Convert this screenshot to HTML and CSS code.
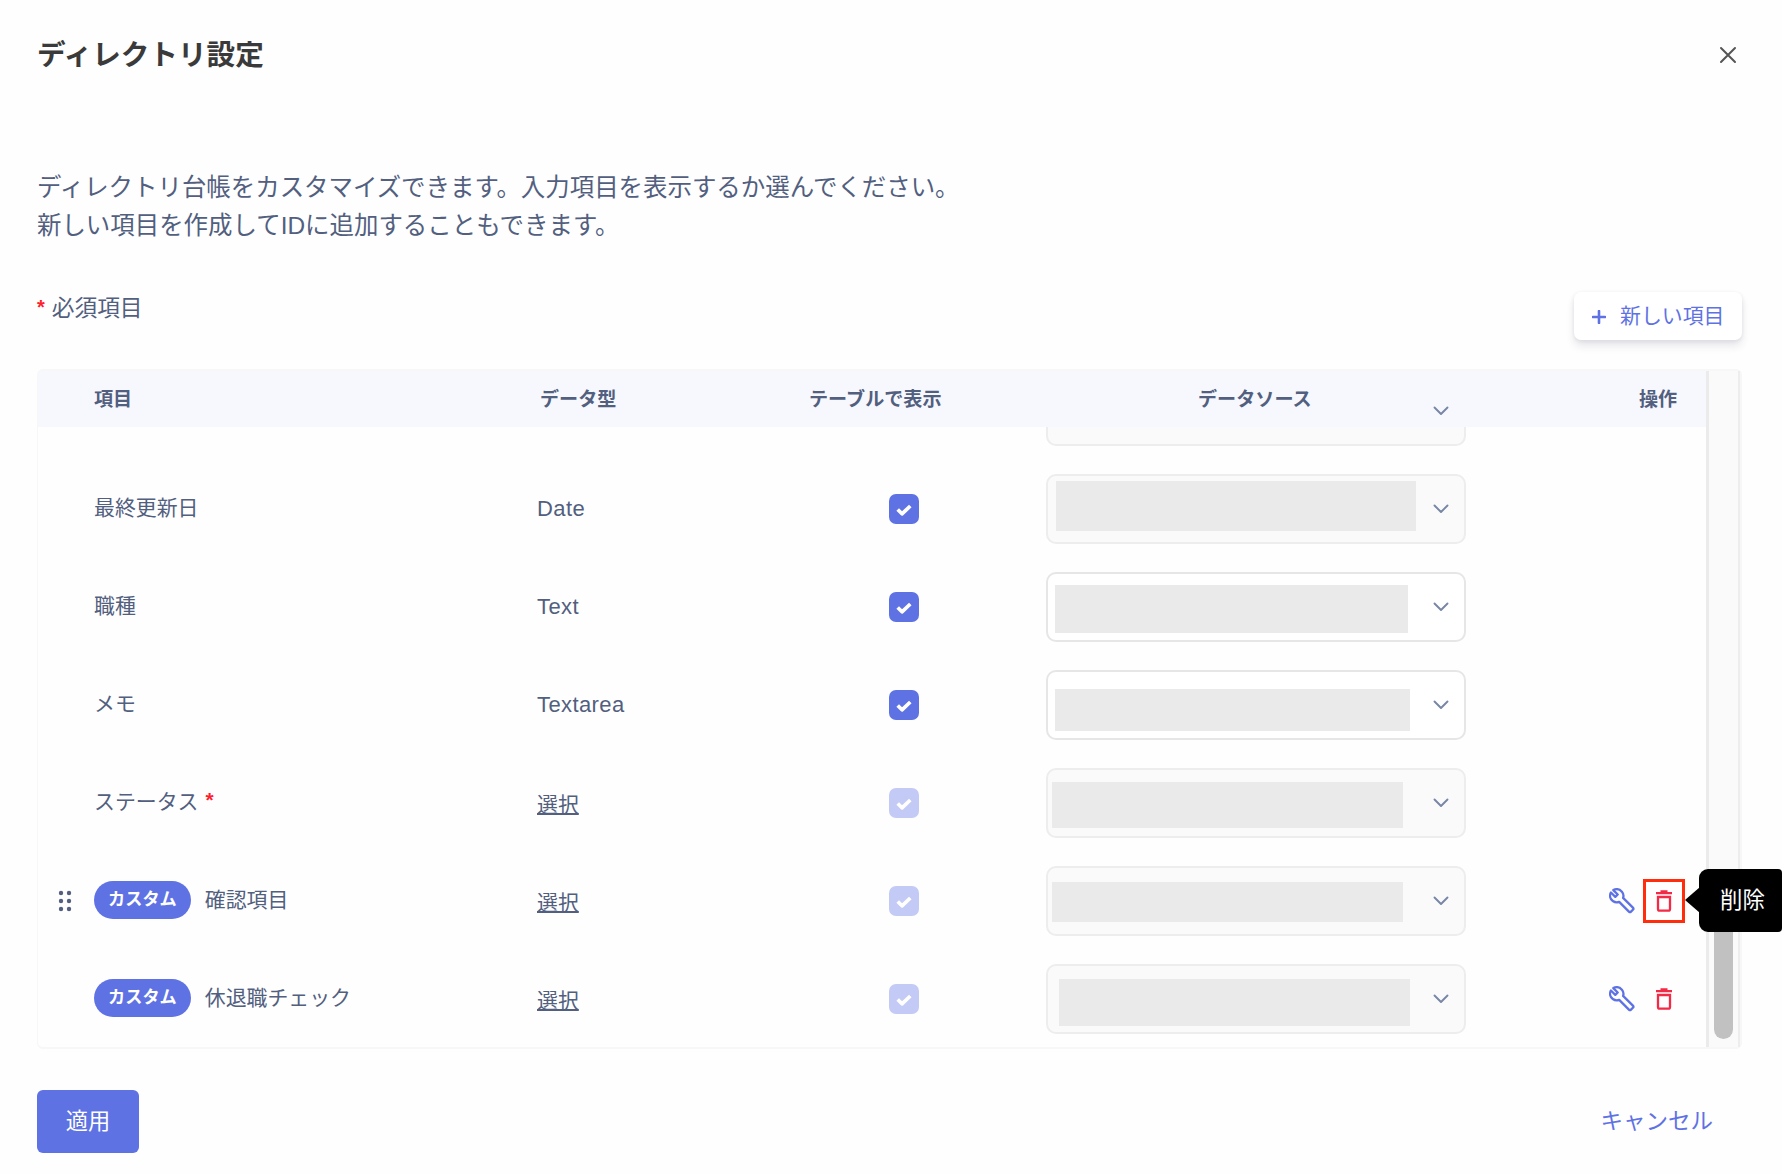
FILE: index.html
```html
<!DOCTYPE html>
<html lang="ja">
<head>
  <meta charset="UTF-8">
  <meta name="viewport" content="width=device-width,initial-scale=1.0">
  <title>ディレクトリ設定</title>
  <link rel="stylesheet" href="styles.css">
</head>
<body>
  <!-- Shared icons -->
  <svg class="sprite" aria-hidden="true">
    <symbol id="chevron" viewBox="0 0 16 10">
      <path d="M1.5 1.5 8 8l6.500-6.500" fill="none" stroke="currentColor" stroke-width="1.9" stroke-linecap="round" stroke-linejoin="round"/>
    </symbol>
    <symbol id="check" viewBox="0 0 16 12">
      <path d="M1.700 5.500 6 9.800 14.300 2" fill="none" stroke="#fff" stroke-width="3.700" stroke-linejoin="round"/>
    </symbol>
    <symbol id="wrench" viewBox="0 0 26 26">
      <path d="M4.300 2.100 8.700 6.500 6.300 8.900 1.900 4.500C.2 7.800 1.300 11.300 3.800 13c2 1.400 4.400 1.600 6.400.9l9.700 9.700c.6.6 1.500.6 2.100 0l1.900-1.900c.6-.6.6-1.500 0-2.100l-9.800-9.700c.7-2 .3-4.400-1.200-6.200C10.800 1.300 7.300.6 4.300 2.100z" fill="none" stroke="currentColor" stroke-width="2.300" stroke-linejoin="round"/>
    </symbol>
    <symbol id="trash" viewBox="0 0 18 22">
      <path d="M1 3.100h16M5.500 1.400h7" fill="none" stroke="currentColor" stroke-width="2.200"/>
      <path d="M3 7h12v12a1.700 1.700 0 0 1-1.700 1.700H4.700A1.700 1.700 0 0 1 3 19z" fill="none" stroke="currentColor" stroke-width="2.300"/>
    </symbol>
  </svg>

  <div class="modal">
    <header class="modal-header">
      <h1>ディレクトリ設定</h1>
      <button class="close" aria-label="閉じる">
        <svg width="18" height="18" viewBox="0 0 18 18"><path d="M2 2l14 14M16 2 2 16" stroke="#555" stroke-width="2" stroke-linecap="round"/></svg>
      </button>
    </header>

    <p class="lead">ディレクトリ台帳をカスタマイズできます。入力項目を表示するか選んでください。<br>新しい項目を作成してIDに追加することもできます。</p>

    <div class="toolbar">
      <div class="legend"><span class="req">*</span>必須項目</div>
      <button class="btn-new">
        <svg width="14" height="14" viewBox="0 0 14 14"><path d="M7 1v12M1 7h12" stroke="currentColor" stroke-width="2.600" stroke-linecap="round"/></svg>
        <span>新しい項目</span>
      </button>
    </div>

    <div class="table">
      <div class="table-main">
        <div class="row head">
          <div></div>
          <div>項目</div>
          <div class="type">データ型</div>
          <div class="show">テーブルで表示</div>
          <div class="source">データソース</div>
          <div class="ops">操作</div>
        </div>
        <div class="body">
          <div class="row">
            <div></div><div></div><div></div><div></div>
            <div class="select disabled"><svg class="chev"><use href="#chevron"/></svg></div>
            <div></div>
          </div>
          <div class="row">
            <div></div>
            <div class="name">最終更新日</div>
            <div class="type">Date</div>
            <div class="show"><span class="box"><svg><use href="#check"/></svg></span></div>
            <div class="select disabled"><span class="mask mask-1"></span><svg class="chev"><use href="#chevron"/></svg></div>
            <div></div>
          </div>
          <div class="row">
            <div></div>
            <div class="name">職種</div>
            <div class="type">Text</div>
            <div class="show"><span class="box"><svg><use href="#check"/></svg></span></div>
            <div class="select"><span class="mask mask-2"></span><svg class="chev"><use href="#chevron"/></svg></div>
            <div></div>
          </div>
          <div class="row">
            <div></div>
            <div class="name">メモ</div>
            <div class="type">Textarea</div>
            <div class="show"><span class="box"><svg><use href="#check"/></svg></span></div>
            <div class="select"><span class="mask mask-3"></span><svg class="chev"><use href="#chevron"/></svg></div>
            <div></div>
          </div>
          <div class="row">
            <div></div>
            <div class="name">ステータス<span class="req">*</span></div>
            <div class="type"><span class="link">選択</span></div>
            <div class="show"><span class="box off"><svg><use href="#check"/></svg></span></div>
            <div class="select disabled"><span class="mask mask-4"></span><svg class="chev"><use href="#chevron"/></svg></div>
            <div></div>
          </div>
          <div class="row">
            <div class="handle">
              <svg width="14" height="22" viewBox="0 0 14 22" fill="#525f7f"><circle cx="3" cy="3" r="2.200"/><circle cx="11" cy="3" r="2.200"/><circle cx="3" cy="11" r="2.200"/><circle cx="11" cy="11" r="2.200"/><circle cx="3" cy="19" r="2.200"/><circle cx="11" cy="19" r="2.200"/></svg>
            </div>
            <div class="name"><span class="badge">カスタム</span>確認項目</div>
            <div class="type"><span class="link">選択</span></div>
            <div class="show"><span class="box off"><svg><use href="#check"/></svg></span></div>
            <div class="select disabled"><span class="mask mask-5"></span><svg class="chev"><use href="#chevron"/></svg></div>
            <div class="ops">
              <svg class="wrench"><use href="#wrench"/></svg>
              <span class="delete marked"><svg class="trash"><use href="#trash"/></svg><span class="tooltip">削除</span></span>
            </div>
          </div>
          <div class="row">
            <div></div>
            <div class="name"><span class="badge">カスタム</span>休退職チェック</div>
            <div class="type"><span class="link">選択</span></div>
            <div class="show"><span class="box off"><svg><use href="#check"/></svg></span></div>
            <div class="select disabled"><span class="mask mask-6"></span><svg class="chev"><use href="#chevron"/></svg></div>
            <div class="ops">
              <svg class="wrench"><use href="#wrench"/></svg>
              <span class="delete"><svg class="trash"><use href="#trash"/></svg></span>
            </div>
          </div>
        </div>
      </div>
      <div class="scrollbar"><div class="thumb"></div></div>
    </div>

    <footer class="modal-footer">
      <button class="btn-apply">適用</button>
      <button class="btn-cancel">キャンセル</button>
    </footer>
  </div>
</body>
</html>
```
FILE: styles.css
```css
* {
  box-sizing: border-box;
}
body {
  margin: 0;
  background: #fefefe;
  color: #525f7f;
  font-family: "Liberation Sans", "Noto Sans CJK JP", sans-serif;
  font-size: 20.9px;
  overflow: hidden;
}
button {
  border: 0;
  padding: 0;
  background: none;
  font: inherit;
  color: #5e72e4;
}
svg {
  display: block;
  flex: none;
}
.sprite {
  position: absolute;
  width: 0;
  height: 0;
}
.modal {
  height: 1174px;
  padding: 34px 40px 0 37px;
}

/* header */
.modal-header {
  display: flex;
  align-items: center;
  justify-content: space-between;
  height: 41px;
  padding-right: 5px;
}
.modal-header h1 {
  margin: 0;
  padding-top: 2px;
  font-size: 28.6px;
  font-weight: 700;
  line-height: 41px;
  color: #3a3a3a;
}
.lead {
  margin: 94px 0 0;
  font-size: 24.45px;
  line-height: 37.5px;
}
.req {
  color: #ff1f2f;
}
.toolbar {
  display: flex;
  justify-content: space-between;
  height: 125px;
  padding-top: 49px;
}
.legend {
  height: 26px;
  margin-top: 1px;
  font-size: 22.7px;
  line-height: 26px;
}
.legend .req {
  margin-right: 7px;
  font-size: 20px;
  font-weight: 700;
  vertical-align: 2px;
}
.btn-new {
  display: flex;
  align-items: center;
  gap: 14px;
  width: 168px;
  height: 48px;
  margin-top: -1px;
  padding: 0 0 0 18px;
  border-radius: 7px;
  background: #fff;
  box-shadow: 0 6px 9px rgba(50, 50, 93, .11), 0 1px 4px rgba(0, 0, 0, .08);
}
.btn-new svg {
  margin-top: 1px;
}
.btn-new span {
  padding-bottom: 4px;
}

/* table */
.table {
  position: relative;
  display: flex;
  height: 680px;
  border: 2px solid #f7f7f8;
  border-left-width: 1px;
  border-radius: 6px;
}
.table-main {
  flex: 1;
  overflow: hidden;
}
.row {
  display: grid;
  grid-template-columns: 56px 443px 220px 289px 420px 1fr;
  align-items: center;
  height: 97.95px;
}
.head {
  position: relative;
  z-index: 1;
  height: 56px;
  padding-bottom: 3px;
  background: #f7f8fd;
  font-size: 19.1px;
  font-weight: 700;
}
.head .type { padding-left: 3px; }
.head .show { padding-left: 52px; }
.head .source { padding-left: 152px; }
.head .ops { padding-left: 173px; }
.body {
  margin-top: -65px;
}
.body .name {
  display: flex;
  align-items: center;
  height: 40px;
  margin-top: -6px;
}
.body .name .req {
  margin-left: 7px;
  font-weight: 700;
}
.body .type {
  font-size: 22px;
  letter-spacing: .4px;
  padding-top: 1px;
}
.link {
  font-size: 20.9px;
  letter-spacing: 0;
  text-decoration: underline;
  text-decoration-thickness: 2px;
  text-underline-offset: 1px;
  text-decoration-skip-ink: all;
}
.body .show {
  padding-left: 132px;
}
.handle {
  padding-left: 20px;
}
.badge {
  height: 38px;
  margin: 5px 14px 0 0;
  padding: 0 14px;
  border-radius: 19px;
  background: #5e72e4;
  color: #fff;
  font-size: 17.2px;
  font-weight: 700;
  line-height: 37px;
}
.box {
  display: flex;
  align-items: center;
  justify-content: center;
  width: 30px;
  height: 30px;
  margin-top: 1px;
  border-radius: 7px;
  background: #5e72e4;
}
.box svg {
  width: 16px;
  height: 12px;
  margin-top: 2px;
}
.box.off {
  background: #c3caf6;
}
.select {
  position: relative;
  height: 70px;
  border: 2px solid #e6e6e7;
  border-radius: 10px;
  background: #fff;
}
.select.disabled {
  border-color: #ededed;
  background: #fafafa;
}
.chev {
  position: absolute;
  z-index: 2;
  top: 28px;
  right: 15px;
  width: 16px;
  height: 10px;
  color: #7886a5;
}
.mask {
  position: absolute;
  background: #eaeaea;
}
.mask-1 { left: 8px; top: 5px; width: 360px; height: 50px; }
.mask-2 { left: 7px; top: 11px; width: 353px; height: 48px; }
.mask-3 { left: 7px; top: 17px; width: 355px; height: 42px; }
.mask-4 { left: 4px; top: 12px; width: 351px; height: 46px; }
.mask-5 { left: 4px; top: 14px; width: 351px; height: 40px; }
.mask-6 { left: 11px; top: 13px; width: 351px; height: 47px; }

.body .ops {
  display: flex;
  align-items: center;
  gap: 8px;
  padding-left: 143px;
}
.wrench {
  width: 26px;
  height: 26px;
  color: #5e72e4;
}
.delete {
  display: flex;
  align-items: center;
  justify-content: center;
  width: 42px;
  height: 44px;
  color: #f22a45;
}
.delete.marked {
  border: 3px solid #ff2d0c;
}
.trash {
  width: 18px;
  height: 22px;
}
.tooltip {
  position: fixed;
  z-index: 5;
  right: 0;
  top: 869px;
  width: 83px;
  height: 63px;
  padding-left: 21px;
  border-radius: 9px 4px 4px 9px;
  background: #000;
  color: #fff;
  font-size: 22.4px;
  line-height: 63px;
}
.tooltip::before {
  content: "";
  position: absolute;
  left: -14px;
  top: 18px;
  border: 13px solid transparent;
  border-left: 0;
  border-right: 15px solid #000;
}
.scrollbar {
  display: flex;
  align-items: flex-end;
  justify-content: center;
  width: 34px;
  padding-bottom: 8px;
  border-left: 3px solid #ebebeb;
  border-right: 2px solid #ededed;
  background: #fafafa;
}
.thumb {
  width: 19px;
  height: 160px;
  border-radius: 10px;
  background: #c1c1c1;
}

/* footer */
.modal-footer {
  display: flex;
  justify-content: space-between;
  padding: 41px 29px 0 0;
}
.btn-apply {
  width: 102px;
  height: 63px;
  padding-bottom: 5px;
  border-radius: 6px;
  background: #5e72e4;
  color: #fff;
  font-size: 22.2px;
}
.btn-cancel {
  padding-bottom: 5px;
  font-size: 22.5px;
}
```
